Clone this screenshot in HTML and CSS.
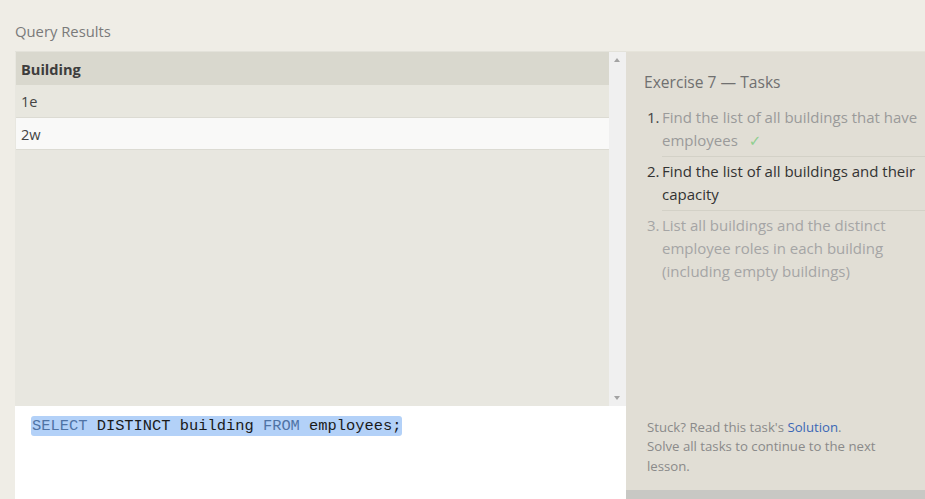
FILE: index.html
```html
<!DOCTYPE html>
<html>
<head>
<meta charset="utf-8">
<link rel="stylesheet" href="styles.css">
</head>
<body>
<div class="page">
  <div class="main">
    <div class="caption">Query Results</div>
    <div class="results">
      <div class="table-wrap">
        <table class="grid">
          <thead><tr><th>Building</th></tr></thead>
          <tbody>
            <tr class="odd"><td>1e</td></tr>
            <tr class="even"><td>2w</td></tr>
          </tbody>
        </table>
      </div>
      <div class="scrollbar">
        <span class="arrow up"></span>
        <span class="arrow down"></span>
      </div>
    </div>
    <div class="editor">
      <div class="code"><span class="sel"><span class="kw">SELECT</span> DISTINCT building <span class="kw">FROM</span> employees;</span></div>
    </div>
  </div>
  <aside class="side">
    <div class="side-body">
      <h2 class="side-title">Exercise 7 — Tasks</h2>
      <ol class="tasks">
        <li class="done"><span class="num">1.</span><span class="txt"><span class="label">Find the list of all buildings that have employees</span><span class="check">✓</span></span></li>
        <li class="active"><span class="num">2.</span><span class="txt">Find the list of all buildings and their capacity</span></li>
        <li class="todo"><span class="num">3.</span><span class="txt">List all buildings and the distinct employee roles in each building (including empty buildings)</span></li>
      </ol>
      <div class="help">
        <p>Stuck? Read this task's <a href="#">Solution</a>.</p>
        <p>Solve all tasks to continue to the next lesson.</p>
      </div>
    </div>
    <div class="side-foot"></div>
  </aside>
</div>
</body>
</html>
```
FILE: styles.css
```css
html, body {
  margin: 0;
  padding: 0;
}
body {
  background: #efede6;
  font-family: "Open Sans", "Noto Sans", sans-serif;
  width: 925px;
  height: 499px;
  overflow: hidden;
}
.page {
  display: flex;
  height: 499px;
}
.main {
  width: 626px;
  padding-left: 15px;
  box-sizing: border-box;
  display: flex;
  flex-direction: column;
}
.caption {
  height: 51px;
  box-sizing: border-box;
  padding-top: 21px;
  font-size: 14.8px;
  color: #7a7a7a;
  line-height: 21px;
}
.results {
  height: 355px;
  display: flex;
  background: #e8e7e0;
  border-top: 1px solid #e3e2da;
  box-sizing: border-box;
}
.table-wrap {
  flex: 1;
  padding-left: 1px;
}
.grid {
  width: 100%;
  border-collapse: collapse;
  font-size: 14.6px;
}
.grid th {
  text-align: left;
  font-weight: 700;
  color: #3d3d3d;
  background: #d9d8ce;
  height: 33px;
  padding: 0 5px;
  box-sizing: border-box;
}
.grid td {
  height: 32px;
  padding: 1px 5px 0 5px;
  color: #444;
  box-sizing: border-box;
}
.grid tr.odd td {
  background: #e8e7df;
  border-bottom: 1px solid #dcdbd3;
}
.grid tr.even td {
  background: #f9f9f8;
  border-bottom: 1px solid #dcdbd3;
}
.scrollbar {
  width: 17px;
  background: #f0f0f0;
  position: relative;
}
.arrow {
  position: absolute;
  left: 5px;
  width: 0;
  height: 0;
  border-left: 3.5px solid transparent;
  border-right: 3.5px solid transparent;
}
.arrow.up {
  top: 6px;
  border-bottom: 4px solid #a3a3a3;
}
.arrow.down {
  bottom: 6px;
  border-top: 4px solid #a3a3a3;
}
.editor {
  flex: 1;
  background: #ffffff;
  padding: 10px 0 0 16px;
}
.code {
  font-family: "Liberation Mono", "DejaVu Sans Mono", monospace;
  font-size: 15.4px;
  line-height: 21px;
  color: #1a1a1a;
}
.sel {
  background: #b3d1f8;
  border-radius: 3px;
  padding: 1px 1px;
}
.kw {
  color: #4f73a5;
}
.side {
  width: 299px;
  display: flex;
  flex-direction: column;
  padding-top: 51px;
  box-sizing: border-box;
}
.side-body {
  flex: 1;
  background: #e1ded5;
  border-top: 1px solid #e6e4da;
  padding: 18px 0 0 18px;
  display: flex;
  flex-direction: column;
  box-sizing: border-box;
}
.side-foot {
  height: 9px;
  background: #c8c8c4;
}
.side-title {
  margin: 0;
  font-weight: 400;
  font-size: 15.6px;
  line-height: 24px;
  color: #707070;
}
.tasks {
  list-style: none;
  margin: 9px 0 0 0;
  padding: 0;
  font-size: 15px;
  line-height: 23px;
}
.tasks li {
  display: flex;
  padding: 3px 0 2px 0;
}
.tasks .num {
  width: 15px;
  flex: none;
  padding-left: 3px;
}
.tasks .txt {
  flex: 1;
  border-bottom: 1px solid #d3d1c7;
  padding-bottom: 4px;
  margin-bottom: -2px;
}
.tasks li:last-child .txt {
  border-bottom: none;
}
.tasks li.done .num { color: #444; }
.tasks li.done .txt { color: #9a9a9a; }
.tasks li.active { color: #333; }
.tasks li.todo { color: #a5a5a5; }
.check {
  display: inline-block;
  font-family: "DejaVu Sans", sans-serif;
  font-size: 15px;
  line-height: 20px;
  color: #8fcf8f;
  margin-left: 11px;
}
.help {
  margin-top: auto;
  width: 240px;
  padding: 0 0 14px 3px;
  font-size: 13.2px;
  line-height: 19.5px;
  color: #8a8a8a;
}
.help p {
  margin: 0;
}
.help a {
  color: #3b67b5;
  text-decoration: none;
}
```
